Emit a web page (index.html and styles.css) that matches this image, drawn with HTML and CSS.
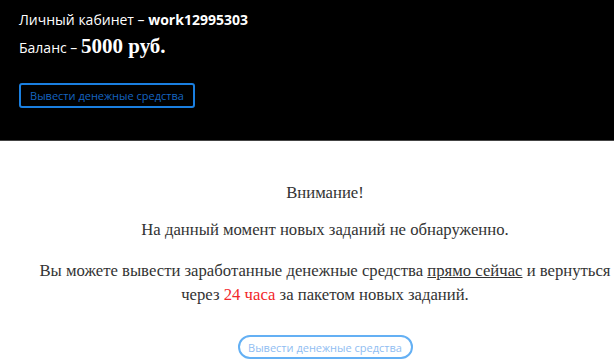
FILE: index.html
```html
<!DOCTYPE html>
<html lang="ru">

<head>
	<meta charset="UTF-8">
	<meta name="viewport" content="width=device-width, initial-scale=1.0">
	<title>Личный кабинет</title>
	<link rel="stylesheet" href="styles.css">
</head>

<body>
	<div class="header">
		<div class="user">Личный кабинет – <b>work12995303</b></div>
		<div class="balance">Баланс – <span class="sum">5000 руб.</span></div>
		<button class="btn btn-dark">Вывести денежные средства</button>
	</div>

	<div class="content">
		<p class="title">Внимание!</p>
		<p class="notice">На данный момент новых заданий не обнаруженно.</p>
		<p class="info">Вы можете вывести заработанные денежные средства <u>прямо сейчас</u> и вернуться через <span class="red">24 часа</span> за пакетом новых заданий.</p>
		<button class="btn btn-light">Вывести денежные средства</button>
	</div>
</body>

</html>
```

FILE: styles.css
```css
* {
	margin: 0;
	padding: 0;
	box-sizing: border-box;
}

body {
	font-family: 'Open Sans', 'Noto Sans', sans-serif;
	background: white;
}

.header {
	background: #000;
	color: white;
	padding: 8px 19px 0;
	height: 141px;
	border-bottom: 1px solid #444;
	font-size: 14px;
}

.user {
	line-height: 24px;
}

.balance {
	line-height: 28px;
}

.sum {
	font-family: 'Liberation Serif', serif;
	font-weight: bold;
	font-size: 21px;
}

.btn {
	font-family: 'Open Sans', 'Noto Sans', sans-serif;
	font-size: 11px;
	background: transparent;
	padding: 0;
	cursor: pointer;
}

.btn-dark {
	margin-top: 21px;
	width: 176px;
	height: 25px;
	border: 2px solid #1a7fe0;
	border-radius: 3px;
	color: #1565c0;
}

.content {
	text-align: center;
	font-family: 'Liberation Serif', serif;
	font-size: 16.7px;
	color: #333;
	padding: 40px 0 0 36px;
}

.content p {
	line-height: 24px;
}

.content .title {
	margin-bottom: 13px;
}

.content .notice {
	margin-bottom: 17px;
}

.content .info {
	margin-bottom: 28px;
}

.red {
	color: #f2262b;
}

.btn-light {
	width: 175px;
	height: 24px;
	border: 2px solid #64b0f4;
	border-radius: 12px;
	color: #90bdf2;
}
```
